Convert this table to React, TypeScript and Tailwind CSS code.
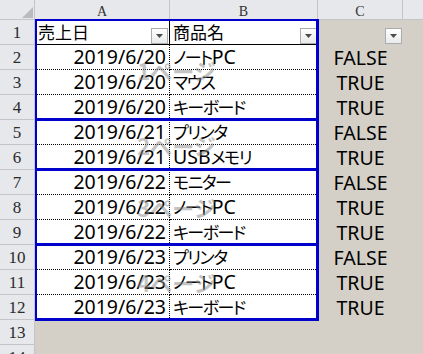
import React from "react";

type Row = { date: string; item: string; flag: string };

const dataRows: Row[] = [
  { date: "2019/6/20", item: "ノートPC", flag: "FALSE" },
  { date: "2019/6/20", item: "マウス", flag: "TRUE" },
  { date: "2019/6/20", item: "キーボード", flag: "TRUE" },
  { date: "2019/6/21", item: "プリンタ", flag: "FALSE" },
  { date: "2019/6/21", item: "USBメモリ", flag: "TRUE" },
  { date: "2019/6/22", item: "モニター", flag: "FALSE" },
  { date: "2019/6/22", item: "ノートPC", flag: "TRUE" },
  { date: "2019/6/22", item: "キーボード", flag: "TRUE" },
  { date: "2019/6/23", item: "プリンタ", flag: "FALSE" },
  { date: "2019/6/23", item: "ノートPC", flag: "TRUE" },
  { date: "2019/6/23", item: "キーボード", flag: "TRUE" },
];

// Page-break preview frames (rows 1-4, 5-6, 7-9, 10-12)
const pages = [
  { label: "1ページ", box: "top-[19px] h-[102px] border-t-2" },
  { label: "2ページ", box: "top-[118px] h-[53px] border-t-[3px]" },
  { label: "3ページ", box: "top-[168px] h-[78px] border-t-[3px]" },
  { label: "4ページ", box: "top-[243px] h-[78px] border-t-[3px]" },
];

const HEAD = "bg-[#e6e8eb] border-[#c3c5c8]";

function Mixed({ text, kana = false }: { text: string; kana?: boolean }) {
  const parts = text.match(/[\x00-\x7f]+|[^\x00-\x7f]+/g) ?? [];
  return (
    <>
      {parts.map((p, i) =>
        /^[\x00-\x7f]/.test(p) ? (
          <span key={i} className="text-[19.5px]">
            {p}
          </span>
        ) : (
          <span
            key={i}
            className={`text-[17px] [font-feature-settings:'palt'] ${kana ? "tracking-[-1.5px]" : ""}`}
          >
            {p}
          </span>
        )
      )}
    </>
  );
}

function FilterButton() {
  return (
    <div className="w-[17px] h-[16px] border border-[#a9abae] bg-gradient-to-b from-white to-[#e9eaec] flex items-center justify-center">
      <svg width="7" height="4" viewBox="0 0 7 4">
        <polygon points="0,0 7,0 3.5,4" fill="#4b4b4b" />
      </svg>
    </div>
  );
}

function ColHead({ label, w }: { label: string; w: string }) {
  return (
    <div
      className={`${w} h-full shrink-0 border-r border-b ${HEAD} flex items-center justify-center pt-[3px] text-[14px] text-[#333] font-['Liberation_Serif',serif]`}
    >
      {label}
    </div>
  );
}

function RowNum({ n }: { n: number }) {
  return (
    <div
      className={`w-[35px] h-full shrink-0 border-r border-b ${HEAD} flex items-center justify-center pt-[2px] text-[17px] text-[#2b2b2b] font-['Liberation_Serif',serif]`}
    >
      {n}
    </div>
  );
}

function SheetRow({ n }: { n: number }) {
  const inPrint = n <= 12;
  const bottom = n === 1 ? "border-b border-black" : "border-b border-dotted border-black";
  const d = n >= 2 ? dataRows[n - 2] : null;

  return (
    <div className="flex h-[25px]">
      <RowNum n={n} />
      {inPrint ? (
        <>
          <div
            className={`w-[135px] shrink-0 bg-white border-r border-black ${bottom} flex items-center pr-[3px] pl-[3px] leading-none text-black`}
          >
            {n === 1 ? (
              <div className="flex w-full items-center justify-between">
                <span className="pt-[1px]">
                  <Mixed text="売上日" />
                </span>
                <span className="self-end pt-[7px] -mr-[2px]">
                  <FilterButton />
                </span>
              </div>
            ) : (
              <span className="ml-auto">
                <Mixed text={d!.date} />
              </span>
            )}
          </div>
          <div
            className={`w-[148px] shrink-0 bg-white ${bottom} flex items-center pl-[3px] leading-none text-black`}
          >
            {n === 1 ? (
              <div className="flex w-full items-center justify-between">
                <span className="pt-[1px]">
                  <Mixed text="商品名" />
                </span>
                <span className="pt-[7px] mr-[1px]">
                  <FilterButton />
                </span>
              </div>
            ) : (
              <Mixed text={d!.item} kana />
            )}
          </div>
        </>
      ) : (
        <div className="w-[283px] shrink-0" />
      )}
      <div className="w-[85px] shrink-0 flex items-center justify-center leading-none text-black">
        {n === 1 ? (
          <div className="w-full flex justify-end pr-[1px] pt-[6px]">
            <FilterButton />
          </div>
        ) : d ? (
          <span className="text-[19.5px]">{d.flag}</span>
        ) : null}
      </div>
      <div className="flex-1" />
    </div>
  );
}

export default function App() {
  return (
    <div className="relative w-[423px] h-[354px] overflow-hidden bg-[#d4d0c8] font-['Noto_Sans','Noto_Sans_CJK_JP',sans-serif]">
      <div className="flex h-[20px]">
        <div className={`w-[35px] h-full shrink-0 border-r border-b ${HEAD} flex items-end justify-end pr-[1px] pb-[1px]`}>
          <svg width="11" height="11" viewBox="0 0 11 11">
            <polygon points="11,0 11,11 0,11" fill="#b9bbbe" />
          </svg>
        </div>
        <ColHead label="A" w="w-[135px]" />
        <ColHead label="B" w="w-[148px]" />
        <ColHead label="C" w="w-[85px]" />
        <div className={`flex-1 h-full border-b ${HEAD}`} />
      </div>

      <div className="flex flex-col">
        {Array.from({ length: 14 }, (_, i) => (
          <SheetRow key={i} n={i + 1} />
        ))}
      </div>

      {pages.map((p) => (
        <div
          key={p.label}
          className={`absolute left-[35px] w-[284px] ${p.box} border-l-2 border-r-[3px] border-b-[3px] border-[#0000cc] flex items-center justify-center pointer-events-none`}
        >
          <span className="text-[22px] font-bold leading-none text-[#8a8a8a] opacity-50 font-['Noto_Sans_CJK_JP',sans-serif]">
            {p.label}
          </span>
        </div>
      ))}
    </div>
  );
}
